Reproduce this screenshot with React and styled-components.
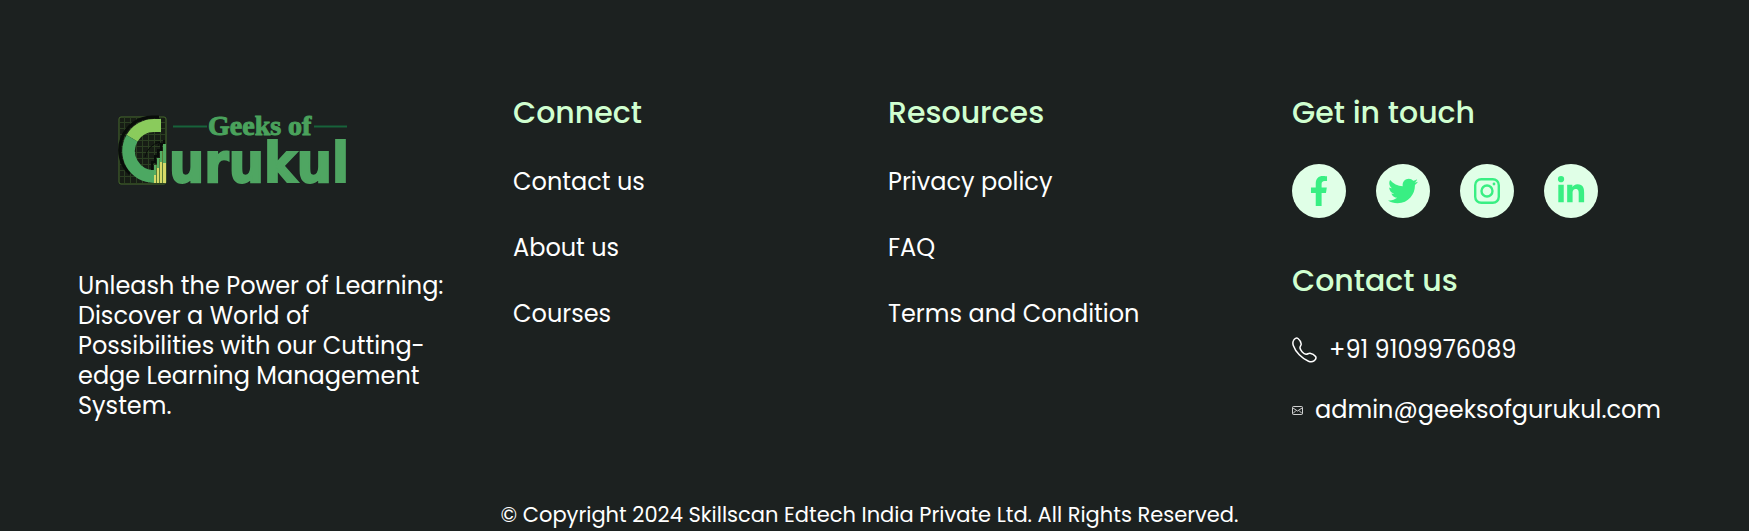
import React from "react";
import styled, { createGlobalStyle } from "styled-components";
import { FaFacebookF, FaTwitter, FaLinkedinIn } from "react-icons/fa";

const GlobalStyle = createGlobalStyle`
  *, *::before, *::after { box-sizing: border-box; }
  body {
    margin: 0;
    background: #1c2120;
    font-family: Poppins, Inter, "Liberation Sans", sans-serif;
  }
`;

const FooterBar = styled.footer`
  background: #1c2120;
  color: #fff;
  padding: 95px 88px 0 78px;
`;

const Columns = styled.div`
  display: grid;
  grid-template-columns: 375fr 315fr 344fr 369fr;
  column-gap: 60px;
  align-items: start;
`;

const Column = styled.div`
  display: flex;
  flex-direction: column;
  align-items: flex-start;
  min-width: 0;
`;

const LogoLink = styled.a`
  display: block;
  padding: 10px 40px 76px;
  svg { display: block; }
`;

const Tagline = styled.p`
  margin: 0;
  padding-right: 5px;
  font-size: 24px;
  line-height: 30px;
`;

const Heading = styled.h2`
  margin: 0 0 ${(p) => p.$space ?? 36}px;
  font-size: 30px;
  line-height: 36px;
  font-weight: 500;
  color: #d0ffd0;
`;

const LinkList = styled.ul`
  display: flex;
  flex-direction: column;
  gap: ${(p) => p.$gap}px;
  margin: 0;
  padding: 0;
  list-style: none;
`;

const TextLink = styled.a`
  display: flex;
  align-items: center;
  gap: 12px;
  color: #fff;
  font-size: 24px;
  line-height: 30px;
  text-decoration: none;
  white-space: nowrap;
  svg { flex: none; }
`;

const Socials = styled.div`
  display: flex;
  gap: 30px;
  margin-bottom: 45px;
`;

const SocialLink = styled.a`
  display: grid;
  place-items: center;
  width: 54px;
  height: 54px;
  border-radius: 50%;
  background: #e0ffe7;
  color: #39ef83;
`;

const Copyright = styled.p`
  margin: 0;
  padding: 77px 0 2px;
  text-align: center;
  font-size: 21px;
  line-height: 26px;
`;

const gridX = [6, 12, 18, 24, 30, 36, 42];
const gridY = [7, 13, 19, 25, 31, 37, 43, 49, 55, 61];

function Logo() {
  return (
    <svg width="240" height="90" viewBox="0 -10 240 90" role="img" aria-label="Geeks of Gurukul">
      <rect x="1" y="2" width="47" height="67" rx="2" fill="#171d15" stroke="#466b2c" />
      <g stroke="#2b3e22" strokeWidth="1">
        {gridX.map((x) => <path key={x} d={`M${x}.5 2V68`} />)}
        {gridY.map((y) => <path key={y} d={`M2 ${y}.5H47`} />)}
      </g>
      <path d="M41 2H34A33 33 0 0 0 12 59" fill="none" stroke="#080c09" strokeWidth="3" />
      <path d="M43 4V17H36A19 19 0 0 0 19.500 26.500L8.500 20A32 32 0 0 1 36 4Z" fill="#8acb5c" />
      <path d="M8.500 20L19.500 26.500A19 19 0 0 0 36 55V68A32 32 0 0 1 8.500 20Z" fill="#4ca862" />
      <path d="M27 42Q30 30 42 27M37 27L42 27L40 31" fill="none" stroke="#080c09" strokeWidth="1" />
      <path d="M34 55V47H37V41H40V35H43V29H46V25" fill="none" stroke="#080c09" strokeWidth="2" />
      <path d="M36 68V50H39V43H42V36H45V29H48V68Z" fill="#55ad62" />
      <path d="M36 68V60H39V53H42V47H45V48H48V68Z" fill="#d6d968" />
      <path d="M38.500 50V68M41.500 44V68M44.500 36V68" stroke="#587c37" strokeWidth="1" />
      <path d="M55 11.500H89M196 11.500H229" stroke="#17633a" strokeWidth="2" />
      <text x="90" y="20" fill="#4aa25c" stroke="#4aa25c" strokeWidth="1" fontFamily="'Liberation Serif', serif" fontWeight="700" fontSize="28">Geeks of</text>
      <text x="51" y="67" fill="#4fa662" stroke="#4fa662" strokeWidth="2" fontFamily="'DejaVu Sans Condensed', 'Open Sans', sans-serif" fontWeight="700" fontSize="55">urukul</text>
    </svg>
  );
}

function InstagramIcon() {
  return (
    <svg width="26" height="26" viewBox="0 0 26 26" fill="none" stroke="currentColor" strokeWidth="2.400" aria-hidden="true">
      <rect x="1.200" y="1.200" width="23.600" height="23.600" rx="6" />
      <circle cx="13" cy="13" r="5.500" />
      <circle cx="20" cy="6" r="1.400" fill="currentColor" stroke="none" />
    </svg>
  );
}

function PhoneIcon() {
  return (
    <svg width="25" height="26" viewBox="0 0 25 26" fill="none" stroke="currentColor" strokeWidth="1.500" strokeLinejoin="round" aria-hidden="true">
      <path d="M1.500 3.500C2.500 1.500 4.500 .500 6 1.500C7.500 2.700 9 5 9.200 7C9.300 8.500 7.800 9.500 8 11C8.500 13.500 11.500 16.800 14 17.300C15.500 17.500 16.300 16 18 16.200C20 16.500 22.500 18 23.600 19.500C24.500 21 23.500 22.700 22 23.800C20.500 25 18.500 25 16.500 24.200C10 21.700 3.500 15 1.300 8.500C.700 6.700 .700 5 1.500 3.500Z" />
    </svg>
  );
}

function EnvelopeIcon() {
  return (
    <svg width="11" height="9" viewBox="0 0 11 9" fill="none" stroke="currentColor" strokeWidth=".800" aria-hidden="true">
      <rect x=".500" y=".500" width="10" height="8" rx="1" />
      <path d="M1 2L5.500 5L10 2M1 7.500L4 4.500M10 7.500L7 4.500" />
    </svg>
  );
}

function LinkColumn({ title, links }) {
  return (
    <Column as="nav" aria-label={title}>
      <Heading>{title}</Heading>
      <LinkList $gap={36}>
        {links.map((text) => (
          <li key={text}><TextLink href="#">{text}</TextLink></li>
        ))}
      </LinkList>
    </Column>
  );
}

export default function App() {
  return (
    <>
      <GlobalStyle />
      <FooterBar>
        <Columns>
          <Column>
            <LogoLink href="#"><Logo /></LogoLink>
            <Tagline>
              Unleash the Power of Learning: Discover a World of Possibilities
              with our Cutting-edge Learning Management System.
            </Tagline>
          </Column>
          <LinkColumn title="Connect" links={["Contact us", "About us", "Courses"]} />
          <LinkColumn title="Resources" links={["Privacy policy", "FAQ", "Terms and Condition"]} />
          <Column>
            <Heading $space={33}>Get in touch</Heading>
            <Socials>
              <SocialLink href="#" aria-label="Facebook"><FaFacebookF size={30} /></SocialLink>
              <SocialLink href="#" aria-label="Twitter"><FaTwitter size={30} /></SocialLink>
              <SocialLink href="#" aria-label="Instagram"><InstagramIcon /></SocialLink>
              <SocialLink href="#" aria-label="LinkedIn"><FaLinkedinIn size={30} /></SocialLink>
            </Socials>
            <Heading>Contact us</Heading>
            <LinkList $gap={30}>
              <li><TextLink href="tel:+919109976089"><PhoneIcon />+91 9109976089</TextLink></li>
              <li><TextLink href="mailto:admin@geeksofgurukul.com"><EnvelopeIcon />admin@geeksofgurukul.com</TextLink></li>
            </LinkList>
          </Column>
        </Columns>
        <Copyright>© Copyright 2024 Skillscan Edtech India Private Ltd. All Rights Reserved.</Copyright>
      </FooterBar>
    </>
  );
}
